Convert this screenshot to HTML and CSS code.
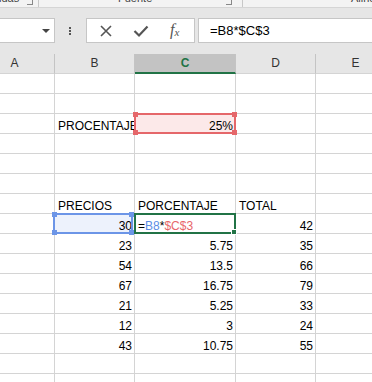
FILE: index.html
```html
<!DOCTYPE html>
<html lang="es">
<head>
    <meta charset="UTF-8">
    <meta name="viewport" content="width=device-width, initial-scale=1.0">
    <title>Hoja de cálculo</title>
    <link rel="stylesheet" href="styles.css">
</head>
<body>

    <!-- Parte baja de la cinta de opciones -->
    <div class="ribbon">
        <div class="group g1"><span class="glabel">Celdas</span><span class="launch"></span></div>
        <div class="group g2"><span class="glabel">Fuente</span><span class="launch"></span></div>
        <div class="group g3"><span class="glabel">Alineación</span></div>
    </div>

    <!-- Barra de fórmulas -->
    <div class="fbar">
        <div class="namebox"><span class="dd"></span></div>
        <div class="dots"><i></i><i></i><i></i></div>
        <div class="fbtns">
            <svg width="14" height="14" viewBox="0 0 14 14"><path d="M2 2 L12 12 M12 2 L2 12" stroke="#555" stroke-width="1.6" fill="none"/></svg>
            <svg width="16" height="14" viewBox="0 0 16 14"><path d="M1.5 7 L6 11.5 L14.5 2.5" stroke="#555" stroke-width="2.2" fill="none"/></svg>
            <span class="fx">f<sub>x</sub></span>
        </div>
        <div class="formula">=B8*$C$3</div>
    </div>

    <!-- Hoja -->
    <div class="sheet">
        <div class="grid">
            <div class="hd">A</div><div class="hd">B</div><div class="hd active">C</div><div class="hd">D</div><div class="hd">E</div>

            <div class="c"></div><div class="c"></div><div class="c"></div><div class="c"></div><div class="c"></div>
            <div class="c"></div><div class="c"></div><div class="c"></div><div class="c"></div><div class="c"></div>
            <div class="c"></div><div class="c clip">PROCENTAJE</div>
            <div class="c num ref-red">25%<span class="box red"><b class="h tl"></b><b class="h tr"></b><b class="h bl"></b><b class="h br"></b></span></div>
            <div class="c"></div><div class="c"></div>
            <div class="c"></div><div class="c"></div><div class="c"></div><div class="c"></div><div class="c"></div>
            <div class="c"></div><div class="c"></div><div class="c"></div><div class="c"></div><div class="c"></div>
            <div class="c"></div><div class="c"></div><div class="c"></div><div class="c"></div><div class="c"></div>
            <div class="c"></div><div class="c">PRECIOS</div><div class="c">PORCENTAJE</div><div class="c">TOTAL</div><div class="c"></div>

            <div class="c"></div>
            <div class="c num ref-blue">30<span class="box blue"><b class="h tl"></b><b class="h tr"></b><b class="h bl"></b><b class="h br"></b></span></div>
            <div class="c editing">=<span class="t-blue">B8</span>*<span class="t-red">$C$3</span><span class="box green"><b class="h br"></b></span></div>
            <div class="c num">42</div><div class="c"></div>

            <div class="c"></div><div class="c num">23</div><div class="c num">5.75</div><div class="c num">35</div><div class="c"></div>
            <div class="c"></div><div class="c num">54</div><div class="c num">13.5</div><div class="c num">66</div><div class="c"></div>
            <div class="c"></div><div class="c num">67</div><div class="c num">16.75</div><div class="c num">79</div><div class="c"></div>
            <div class="c"></div><div class="c num">21</div><div class="c num">5.25</div><div class="c num">33</div><div class="c"></div>
            <div class="c"></div><div class="c num">12</div><div class="c num">3</div><div class="c num">24</div><div class="c"></div>
            <div class="c"></div><div class="c num">43</div><div class="c num">10.75</div><div class="c num">55</div><div class="c"></div>

            <div class="c"></div><div class="c"></div><div class="c"></div><div class="c"></div><div class="c"></div>
            <div class="c"></div><div class="c"></div><div class="c"></div><div class="c"></div><div class="c"></div>
        </div>
    </div>

</body>
</html>
```

FILE: styles.css
```css
body {
    margin: 0;
    font-family: "Liberation Sans", Arial, sans-serif;
    background-color: #ffffff;
    width: 372px;
    height: 382px;
    overflow: hidden;
}

/* cinta */
.ribbon {
    display: flex;
    height: 7px;
    overflow: hidden;
    background-color: #f3f3f3;
    border-bottom: 1px solid #d5d5d5;
}
.group {
    position: relative;
    flex-shrink: 0;
    height: 7px;
    font-size: 11px;
    color: #444;
    white-space: nowrap;
}
.glabel {
    display: block;
    line-height: 11px;
    margin-top: -7px;
}
.g1 {
    width: 38px;
    border-right: 1px solid #c8c8c8;
}
.g1 .glabel {
    margin-left: -15px;
}
.g2 {
    width: 203px;
    border-right: 1px solid #c8c8c8;
}
.g2 .glabel {
    padding-left: 79px;
}
.g3 .glabel {
    padding-left: 108px;
}
.launch {
    position: absolute;
    top: 0;
    width: 5px;
    height: 4px;
    border-right: 1px solid #888;
    border-bottom: 1px solid #888;
}
.g1 .launch { left: 27px; }
.g2 .launch { left: 187px; }

/* barra de fórmulas */
.fbar {
    display: flex;
    align-items: flex-start;
    height: 36px;
    padding-top: 10px;
    background-color: #e6e6e6;
}
.namebox, .fbtns, .formula {
    height: 23px;
    background-color: #fff;
    border: 1px solid #c6c6c6;
}
.namebox {
    position: relative;
    flex-shrink: 0;
    width: 54px;
    border-left: none;
}
.dd {
    position: absolute;
    left: 42px;
    top: 10px;
    border-left: 4px solid transparent;
    border-right: 4px solid transparent;
    border-top: 4px solid #444;
}
.dots {
    display: flex;
    flex-direction: column;
    flex-shrink: 0;
    gap: 1px;
    width: 3px;
    margin: 9px 14px 0 14px;
}
.dots i {
    display: block;
    width: 2px;
    height: 2px;
    background-color: #555;
}
.fbtns {
    display: flex;
    flex-shrink: 0;
    align-items: center;
    width: 107px;
    margin-right: 3px;
}
.fbtns svg:first-child {
    margin-left: 12px;
}
.fbtns svg + svg {
    margin-left: 20px;
}
.fx {
    margin-left: 21px;
    font-family: "Liberation Serif", serif;
    font-style: italic;
    font-size: 16px;
    color: #555;
    line-height: 16px;
}
.fx sub {
    font-size: 11px;
    vertical-align: -1px;
}
.formula {
    flex: 1;
    border-right: none;
    padding-left: 11px;
    font-size: 13px;
    line-height: 24px;
    color: #000;
}

/* hoja */
.sheet {
    overflow: hidden;
}
.grid {
    display: grid;
    grid-template-columns: 80px 80px 101px 80px 80px;
    grid-auto-rows: 20px;
    margin-left: -25px;
}
.hd {
    box-sizing: border-box;
    background-color: #e6e6e6;
    border-right: 1px solid #c4c4c4;
    border-bottom: 1px solid #d4d4d4;
    font-size: 12px;
    line-height: 19px;
    text-align: center;
    color: #333;
}
.hd.active {
    background-color: #c3c3c3;
    border-bottom: 2px solid #217346;
    color: #217346;
    font-weight: bold;
    line-height: 18px;
}
.c {
    position: relative;
    box-sizing: border-box;
    display: flex;
    align-items: flex-end;
    padding: 0 3px 0 3px;
    border-right: 1px solid #d4d4d4;
    border-bottom: 1px solid #d4d4d4;
    font-size: 12px;
    line-height: 14px;
    color: #000;
    white-space: nowrap;
}
.clip {
    overflow: hidden;
    padding-right: 0;
}
.num {
    justify-content: flex-end;
    padding-right: 2px;
}

/* referencias de la fórmula */
.ref-red {
    background-color: #fce9e9;
}
.ref-blue {
    background-color: #edf2fc;
}
.t-blue { color: #5b8de6; }
.t-red { color: #e8676b; }
.editing {
    padding-left: 3px;
}
.box {
    position: absolute;
    left: -1px;
    top: -1px;
    right: -1px;
    bottom: -1px;
    border: 2px solid;
    z-index: 1;
}
.box.red { border-color: #e5676a; }
.box.blue {
    border-color: #6c95e7;
    left: -2px;
    right: 1px;
}
.box.green {
    border-color: #217346;
    z-index: 2;
}
.h {
    position: absolute;
    width: 5px;
    height: 5px;
}
.red .h { background-color: #e5676a; }
.blue .h { background-color: #6c95e7; }
.green .h {
    background-color: #217346;
    border: 1px solid #fff;
    width: 4px;
    height: 4px;
}
.tl { left: -3px; top: -3px; }
.tr { right: -3px; top: -3px; }
.bl { left: -3px; bottom: -3px; }
.br { right: -3px; bottom: -3px; }
```
